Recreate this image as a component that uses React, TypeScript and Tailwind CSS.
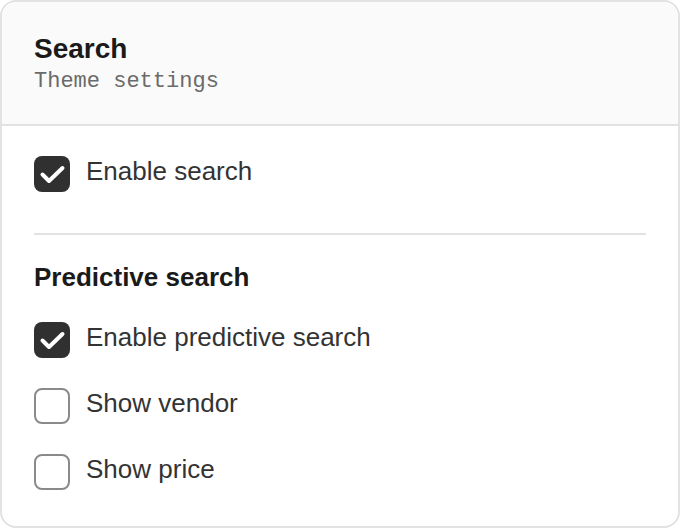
import React, { useState } from "react";

type Item = { id: string; label: string; checked: boolean };

function Checkbox({ checked, onChange }: { checked: boolean; onChange: () => void }) {
  return (
    <button
      type="button"
      onClick={onChange}
      className={
        checked
          ? "flex h-9 w-9 shrink-0 items-center justify-center rounded-lg bg-[#303030]"
          : "flex h-9 w-9 shrink-0 items-center justify-center rounded-lg border-2 border-[#8a8a8a] bg-white"
      }
    >
      {checked && (
        <svg width="36" height="36" viewBox="0 0 36 36" fill="none">
          <path
            d="M8.5 18.5L15 25L28.5 12"
            stroke="white"
            strokeWidth="4"
            strokeLinecap="round"
            strokeLinejoin="round"
          />
        </svg>
      )}
    </button>
  );
}

function Row({ item, toggle }: { item: Item; toggle: (id: string) => void }) {
  return (
    <label className="flex items-start gap-4 cursor-pointer">
      <Checkbox checked={item.checked} onChange={() => toggle(item.id)} />
      <span className="text-[26px] leading-[30px] text-[#333333]">{item.label}</span>
    </label>
  );
}

export default function App() {
  const [items, setItems] = useState<Item[]>([
    { id: "search", label: "Enable search", checked: true },
    { id: "predictive", label: "Enable predictive search", checked: true },
    { id: "vendor", label: "Show vendor", checked: false },
    { id: "price", label: "Show price", checked: false },
  ]);

  const toggle = (id: string) =>
    setItems((prev) => prev.map((i) => (i.id === id ? { ...i, checked: !i.checked } : i)));

  return (
    <div className="bg-white" style={{ fontFamily: '"Liberation Sans", Arial, sans-serif' }}>
      <div className="h-[528px] overflow-hidden rounded-2xl border-2 border-[#e2e2e2] bg-white">
        <div className="border-b-2 border-[#e2e2e2] bg-[#fafafa] px-8 pt-[29px] pb-[28px]">
          <h1 className="text-[28px] font-bold leading-[35px] text-[#1a1a1a]">Search</h1>
          <p
            className="mt-[2px] text-[22px] leading-7 text-[#6b6b6b]"
            style={{ fontFamily: '"Liberation Mono", "Courier New", monospace' }}
          >
            Theme settings
          </p>
        </div>

        <div className="px-8 pt-[30px]">
          <Row item={items[0]} toggle={toggle} />
          <div className="mt-[41px] h-[2px] bg-[#e2e2e2]" />
          <h2 className="mt-[26px] text-[26px] font-bold leading-8 text-[#1a1a1a]">
            Predictive search
          </h2>
          <div className="mt-[29px] flex flex-col gap-[30px]">
            {items.slice(1).map((item) => (
              <Row key={item.id} item={item} toggle={toggle} />
            ))}
          </div>
        </div>
      </div>
    </div>
  );
}
